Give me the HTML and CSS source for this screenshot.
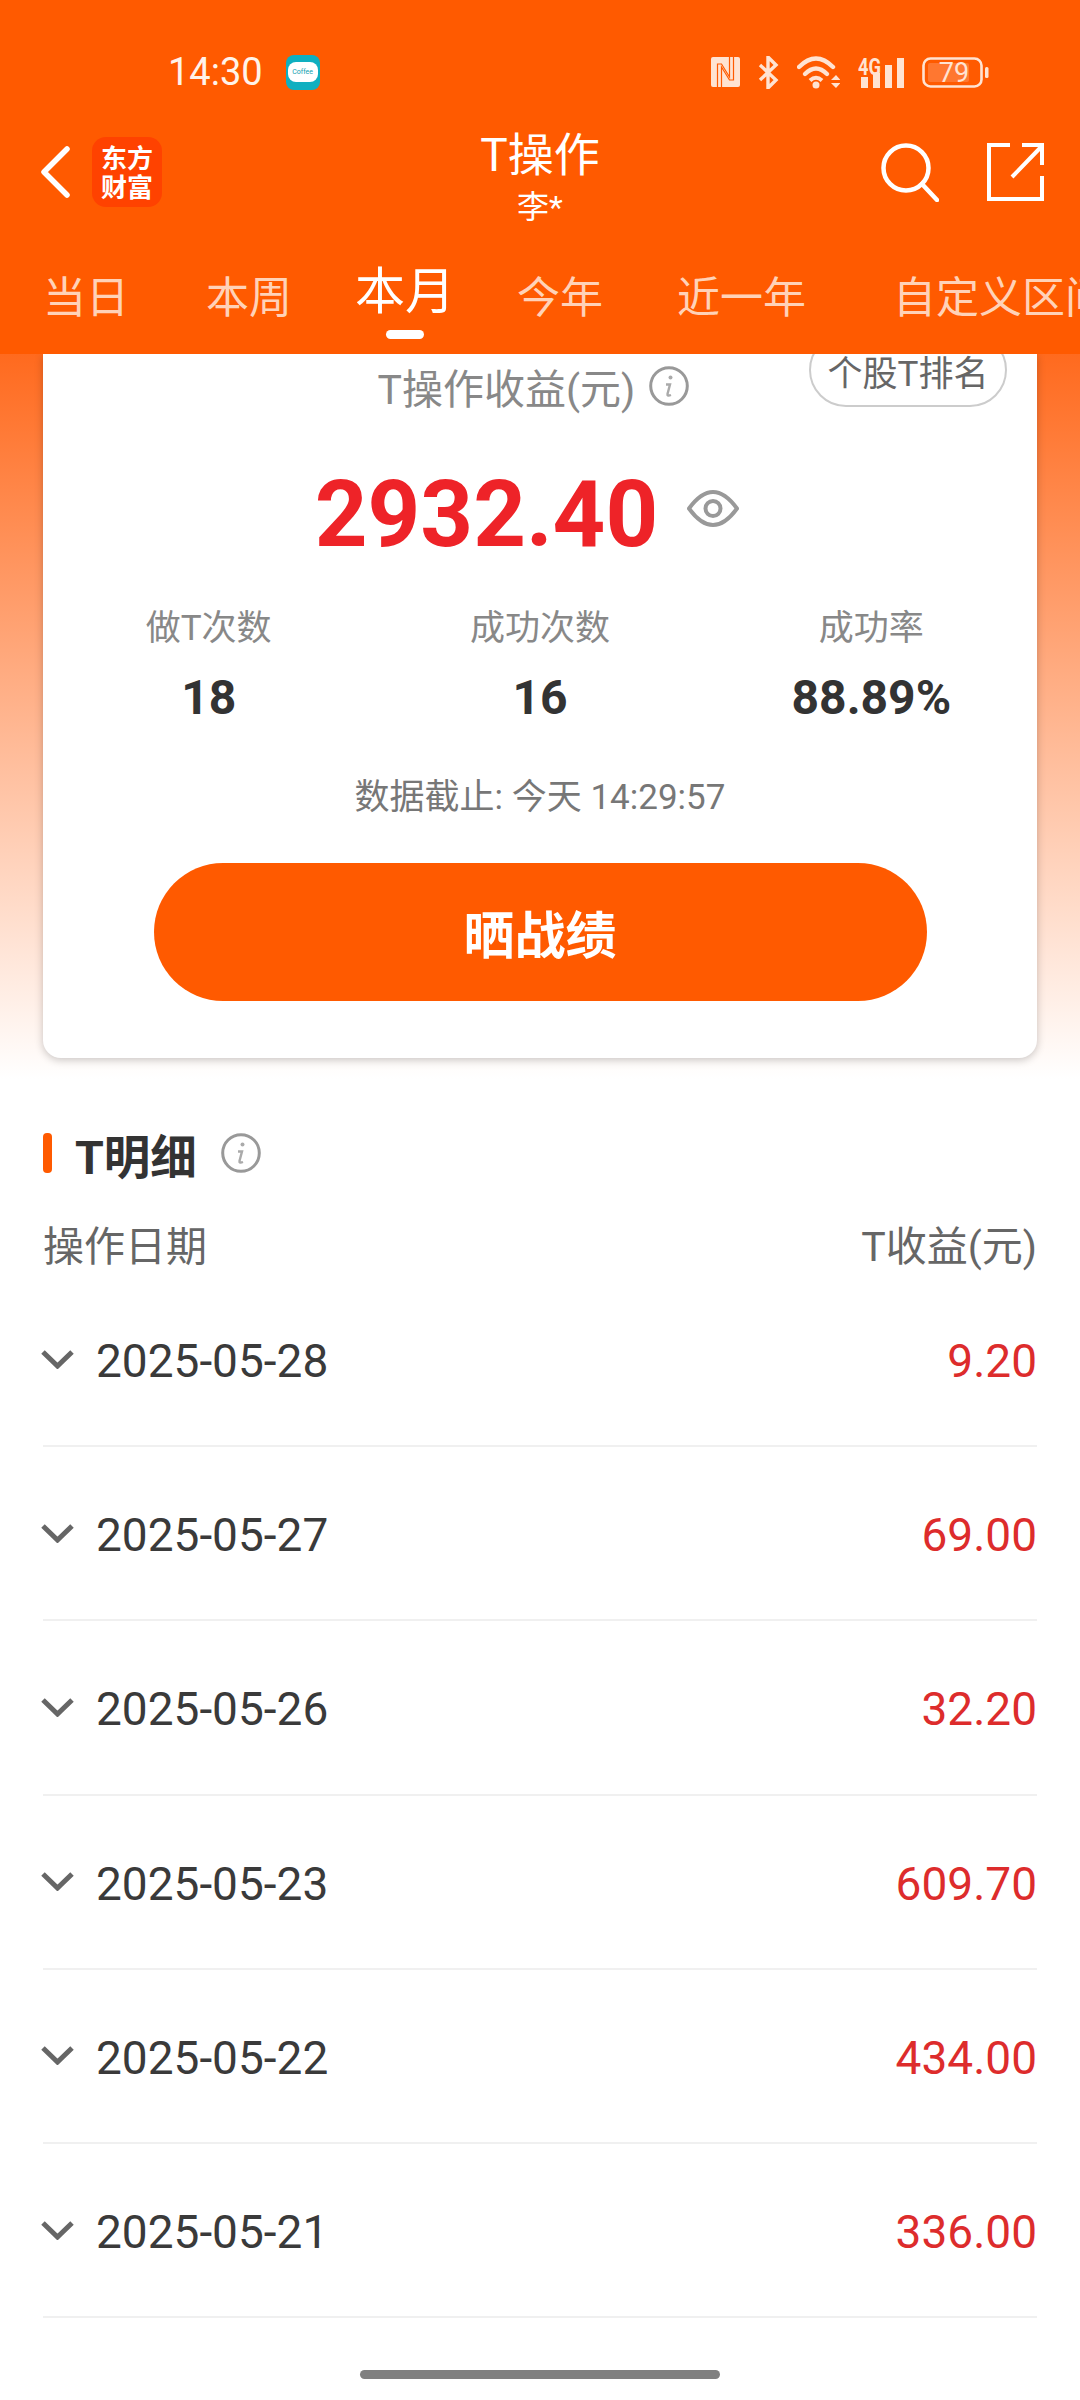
FILE: index.html
```html
<!DOCTYPE html>
<html lang="zh-CN">
<head>
    <meta charset="UTF-8">
    <meta name="viewport" content="width=device-width, initial-scale=1.0">
    <title>T操作</title>
    <link rel="stylesheet" href="styles.css">
</head>
<body>
    <div class="page">
        <header class="header">
            <div class="status-bar">
                <span class="time">14:30</span>
                <span class="app-badge"><span class="app-badge-pill">Coffee</span></span>
                <div class="status-icons">
                    <!-- NFC -->
                    <svg width="29" height="30" viewBox="0 0 29 30">
                        <rect width="29" height="30" rx="2" fill="#ffe3d2"/>
                        <path d="M6.500 30V7h4l8 13V0M22.500 0v23h-4l-8-13v20" fill="none" stroke="#ff5a00" stroke-width="1.200"/>
                    </svg>
                    <!-- Bluetooth -->
                    <svg width="21" height="33" viewBox="0 0 21 33">
                        <path d="M2 9l16 15-8 8V1l8 8L2 24" fill="none" stroke="#ffe3d2" stroke-width="3.400"/>
                    </svg>
                    <!-- Wifi -->
                    <svg width="43" height="33" viewBox="0 0 43 33">
                        <path d="M2 11Q19-6 36 11" fill="none" stroke="#ffe3d2" stroke-width="4.400" stroke-linecap="round"/>
                        <path d="M8 18Q19 7 30 18" fill="none" stroke="#ffe3d2" stroke-width="4.400" stroke-linecap="round"/>
                        <path d="M13 24.500Q19 19 25 24.500" fill="none" stroke="#ffe3d2" stroke-width="4"/>
                        <circle cx="19" cy="29" r="3.500" fill="#ffe3d2"/>
                        <path d="M34 24l5-5 4.500 5zM34 27l5 5 4.500-5z" fill="#ffe3d2"/>
                    </svg>
                    <!-- Signal -->
                    <svg width="46" height="31" viewBox="0 0 46 31">
                        <text class="signal-label" x="0" y="18" textLength="23" lengthAdjust="spacingAndGlyphs">4G</text>
                        <rect x="3" y="20" width="7" height="11" fill="#ffe3d2"/>
                        <rect x="15" y="16" width="7" height="15" fill="#ffe3d2"/>
                        <rect x="27" y="8" width="7" height="23" fill="#ffe3d2"/>
                        <rect x="39" y="1" width="7" height="30" fill="#ffe3d2"/>
                    </svg>
                    <!-- Battery -->
                    <svg width="67" height="31" viewBox="0 0 67 31">
                        <rect x="1.500" y="1.500" width="58" height="28" rx="7" fill="none" stroke="#ffe3d2" stroke-width="2.600"/>
                        <rect x="6" y="6" width="41" height="19" rx="2" fill="#ff7730"/>
                        <rect x="63" y="10" width="3.500" height="11" rx="1.500" fill="#ffe3d2"/>
                        <text class="battery-label" x="32" y="25" text-anchor="middle">79</text>
                    </svg>
                </div>
            </div>

            <div class="nav-bar">
                <div class="nav-left">
                    <svg class="back" width="30" height="52" viewBox="0 0 30 52">
                        <path d="M27 3L4 26l23 23" fill="none" stroke="#fff" stroke-width="5.500" stroke-linecap="round" stroke-linejoin="round"/>
                    </svg>
                    <div class="logo"><span>东方</span><span>财富</span></div>
                </div>
                <div class="nav-title">
                    <div class="nav-title-main">T操作</div>
                    <div class="nav-title-sub">李*</div>
                </div>
                <div class="nav-right">
                    <svg width="58" height="59" viewBox="0 0 58 59">
                        <circle cx="25" cy="25" r="22.500" fill="none" stroke="#fff" stroke-width="4.500"/>
                        <path d="M41 41l15 16" fill="none" stroke="#fff" stroke-width="4.500" stroke-linecap="round"/>
                    </svg>
                    <svg width="57" height="58" viewBox="0 0 57 58">
                        <path d="M23 2H2v54h53V33" fill="none" stroke="#fff" stroke-width="4"/>
                        <path d="M25 34L54 4M35 2h20v20" fill="none" stroke="#fff" stroke-width="4"/>
                    </svg>
                </div>
            </div>

            <nav class="tabs">
                <div class="tab">当日</div>
                <div class="tab">本周</div>
                <div class="tab tab-active">本月<span class="tab-line"></span></div>
                <div class="tab">今年</div>
                <div class="tab">近一年</div>
                <div class="tab">自定义区间</div>
            </nav>
        </header>

        <section class="summary">
            <div class="card">
                <button class="rank-pill">个股T排名</button>
                <div class="card-title">
                    <span>T操作收益(元)</span>
                    <svg class="info" width="40" height="40" viewBox="0 0 40 40">
                        <circle cx="20" cy="20" r="18.300" fill="none" stroke="#999" stroke-width="3"/>
                        <circle cx="21.500" cy="11.500" r="2" fill="#aaa"/>
                        <path d="M17 18.500h4l-2.500 9.500q-.5 2.500 3.500 1" fill="none" stroke="#aaa" stroke-width="2.400"/>
                    </svg>
                </div>
                <div class="profit">
                    <span class="profit-value">2932.40</span>
                    <svg class="eye" width="52" height="39" viewBox="0 0 52 39">
                        <path d="M2 19.500Q14 3 26 3t24 16.500Q38 36 26 36T2 19.500z" fill="none" stroke="#999" stroke-width="4" stroke-linejoin="round"/>
                        <circle cx="26" cy="19.500" r="7.500" fill="none" stroke="#999" stroke-width="4"/>
                    </svg>
                </div>
                <div class="stats">
                    <div class="stat">
                        <div class="stat-label">做T次数</div>
                        <div class="stat-value">18</div>
                    </div>
                    <div class="stat">
                        <div class="stat-label">成功次数</div>
                        <div class="stat-value">16</div>
                    </div>
                    <div class="stat">
                        <div class="stat-label">成功率</div>
                        <div class="stat-value">88.89%</div>
                    </div>
                </div>
                <div class="as-of">数据截止: 今天 14:29:57</div>
                <button class="share-btn">晒战绩</button>
            </div>
        </section>

        <section class="detail">
            <div class="detail-title">
                <span class="detail-bar"></span>
                <span class="detail-name">T明细</span>
                <svg class="info" width="40" height="40" viewBox="0 0 40 40">
                    <circle cx="20" cy="20" r="18.300" fill="none" stroke="#999" stroke-width="3"/>
                    <circle cx="21.500" cy="11.500" r="2" fill="#aaa"/>
                    <path d="M17 18.500h4l-2.500 9.500q-.5 2.500 3.500 1" fill="none" stroke="#aaa" stroke-width="2.400"/>
                </svg>
            </div>
            <div class="detail-head">
                <span>操作日期</span>
                <span>T收益(元)</span>
            </div>
            <div class="rows">
                <div class="row">
                    <svg class="chevron" width="33" height="19" viewBox="0 0 33 19"><path d="M2 2l14.500 14L31 2" fill="none" stroke="#666" stroke-width="5"/></svg>
                    <span class="row-date">2025-05-28</span>
                    <span class="row-value">9.20</span>
                </div>
                <div class="row">
                    <svg class="chevron" width="33" height="19" viewBox="0 0 33 19"><path d="M2 2l14.500 14L31 2" fill="none" stroke="#666" stroke-width="5"/></svg>
                    <span class="row-date">2025-05-27</span>
                    <span class="row-value">69.00</span>
                </div>
                <div class="row">
                    <svg class="chevron" width="33" height="19" viewBox="0 0 33 19"><path d="M2 2l14.500 14L31 2" fill="none" stroke="#666" stroke-width="5"/></svg>
                    <span class="row-date">2025-05-26</span>
                    <span class="row-value">32.20</span>
                </div>
                <div class="row">
                    <svg class="chevron" width="33" height="19" viewBox="0 0 33 19"><path d="M2 2l14.500 14L31 2" fill="none" stroke="#666" stroke-width="5"/></svg>
                    <span class="row-date">2025-05-23</span>
                    <span class="row-value">609.70</span>
                </div>
                <div class="row">
                    <svg class="chevron" width="33" height="19" viewBox="0 0 33 19"><path d="M2 2l14.500 14L31 2" fill="none" stroke="#666" stroke-width="5"/></svg>
                    <span class="row-date">2025-05-22</span>
                    <span class="row-value">434.00</span>
                </div>
                <div class="row">
                    <svg class="chevron" width="33" height="19" viewBox="0 0 33 19"><path d="M2 2l14.500 14L31 2" fill="none" stroke="#666" stroke-width="5"/></svg>
                    <span class="row-date">2025-05-21</span>
                    <span class="row-value">336.00</span>
                </div>
            </div>
        </section>

        <div class="home-bar"></div>
    </div>
</body>
</html>
```

FILE: styles.css
```css
* {
    box-sizing: border-box;
}
body {
    margin: 0;
    background-color: #fff;
    font-family: Roboto, "Noto Sans CJK SC", sans-serif;
    color: #333;
}
.page {
    width: 1080px;
    height: 2400px;
    overflow: hidden;
    display: flex;
    flex-direction: column;
    background-color: #fff;
}

/* Orange header */
.header {
    position: relative;
    z-index: 2;
    height: 354px;
    flex-shrink: 0;
    background-color: #ff5a00;
    color: #fff;
}
.status-bar {
    display: flex;
    align-items: center;
    height: 104px;
    padding: 40px 91px 0 168px;
}
.time {
    font-size: 38px;
    color: #fff3ea;
}
.app-badge {
    display: flex;
    align-items: center;
    justify-content: center;
    width: 34px;
    height: 35px;
    margin-left: 23px;
    border-radius: 8px;
    background-color: #0fafc0;
}
.app-badge-pill {
    width: 30px;
    height: 20px;
    border-radius: 8px;
    background-color: #fff;
    color: #0fa0b0;
    font-size: 7px;
    line-height: 20px;
    text-align: center;
}
.status-icons {
    display: flex;
    align-items: center;
    gap: 18px;
    margin-left: auto;
}
.signal-label {
    font-size: 24px;
    font-weight: 700;
    fill: #ffe3d2;
}
.battery-label {
    font-size: 27px;
    fill: #ffe3d2;
}

.nav-bar {
    display: grid;
    grid-template-columns: 1fr auto 1fr;
    align-items: center;
    height: 136px;
    padding: 0 36px 0 40px;
}
.nav-left {
    display: flex;
    align-items: center;
}
.logo {
    display: flex;
    flex-direction: column;
    align-items: center;
    justify-content: center;
    width: 70px;
    height: 70px;
    margin-left: 22px;
    padding-top: 3px;
    border-radius: 14px;
    background-color: #ff4200;
    font-size: 26px;
    font-weight: 700;
    line-height: 29px;
}
.nav-title {
    text-align: center;
    margin-left: -4px;
    padding-top: 12px;
}
.nav-title-main {
    font-size: 46px;
    line-height: 50px;
}
.nav-title-sub {
    font-size: 32px;
    line-height: 40px;
    margin-top: 7px;
}
.nav-right {
    display: flex;
    align-items: center;
    justify-content: flex-end;
    gap: 48px;
}

.tabs {
    display: grid;
    grid-template-columns: 163px 149px 162px 160px 216px 210px;
    align-items: start;
    height: 114px;
    padding-left: 43px;
    overflow: hidden;
    white-space: nowrap;
}
.tab {
    padding-top: 37px;
    font-size: 43px;
    line-height: 42px;
    color: #ffd2b8;
}
.tab-active {
    padding-top: 29px;
    font-size: 50px;
    line-height: 46px;
    color: #fff;
}
.tab-line {
    display: block;
    width: 38px;
    height: 9px;
    margin: 15px 0 0 31px;
    border-radius: 5px;
    background-color: #fff;
}

/* Summary card on the fading background */
.summary {
    height: 756px;
    flex-shrink: 0;
    padding: 0 43px;
    background: linear-gradient(#ff6a1e 0, #fff 725px);
}
.card {
    position: relative;
    height: 704px;
    padding-top: 8px;
    border-radius: 0 0 18px 18px;
    background-color: #fff;
    box-shadow: 0 2px 9px rgba(0, 0, 0, 0.22);
    text-align: center;
}
.rank-pill {
    position: absolute;
    top: -21px;
    right: 30px;
    width: 198px;
    height: 74px;
    padding: 0;
    border: 2px solid #ccc;
    border-radius: 37px;
    background-color: #fff;
    color: #666;
    font-family: inherit;
    font-size: 35px;
}
.card-title {
    display: flex;
    align-items: center;
    justify-content: center;
    gap: 14px;
    padding-right: 13px;
    height: 48px;
    font-size: 41px;
    color: #888;
}
.profit {
    display: flex;
    align-items: center;
    justify-content: center;
    gap: 29px;
    height: 100px;
    margin-top: 52px;
    padding-right: 26px;
}
.profit-value {
    padding-top: 6px;
    font-size: 92px;
    font-weight: 700;
    line-height: 100px;
    color: #ee2328;
}
.eye {
    position: relative;
    top: -4px;
}
.stats {
    display: grid;
    grid-template-columns: repeat(3, 1fr);
    margin-top: 45px;
}
.stat-label {
    font-size: 35px;
    line-height: 44px;
    color: #888;
}
.stat-value {
    margin-top: 19px;
    font-size: 48px;
    font-weight: 700;
    line-height: 56px;
    color: #333;
}
.as-of {
    margin-top: 50px;
    font-size: 35px;
    line-height: 44px;
    color: #777;
}
.share-btn {
    display: block;
    width: 773px;
    height: 138px;
    margin: 43px auto 0;
    padding: 0;
    border: none;
    border-radius: 69px;
    background-color: #ff5a00;
    color: #fff;
    font-family: inherit;
    font-size: 51px;
    font-weight: 700;
}

/* Detail list */
.detail {
    padding: 23px 43px 0;
}
.detail-title {
    display: flex;
    align-items: center;
    height: 40px;
}
.detail-bar {
    width: 9px;
    height: 40px;
    border-radius: 4px;
    background-color: #ff5a00;
}
.detail-name {
    margin-left: 23px;
    font-size: 46.5px;
    font-weight: 700;
    color: #333;
}
.detail-title .info {
    margin-left: 24px;
}
.detail-head {
    display: flex;
    justify-content: space-between;
    height: 48px;
    margin-top: 50px;
    font-size: 41px;
    line-height: 48px;
    color: #666;
}
.rows {
    margin-top: 2px;
}
.row {
    display: flex;
    align-items: center;
    height: 174.2px;
    padding-top: 4px;
    border-bottom: 2px solid #f0f0f0;
}
.chevron {
    margin-left: -2px;
    margin-right: 22px;
    position: relative;
    top: -2px;
}
.row-date {
    font-size: 46px;
    color: #3a3a3a;
}
.row-value {
    margin-left: auto;
    font-size: 46px;
    color: #dd2c2c;
}

.home-bar {
    width: 360px;
    height: 9px;
    margin: auto auto 21px;
    border-radius: 5px;
    background-color: #808080;
}
```
